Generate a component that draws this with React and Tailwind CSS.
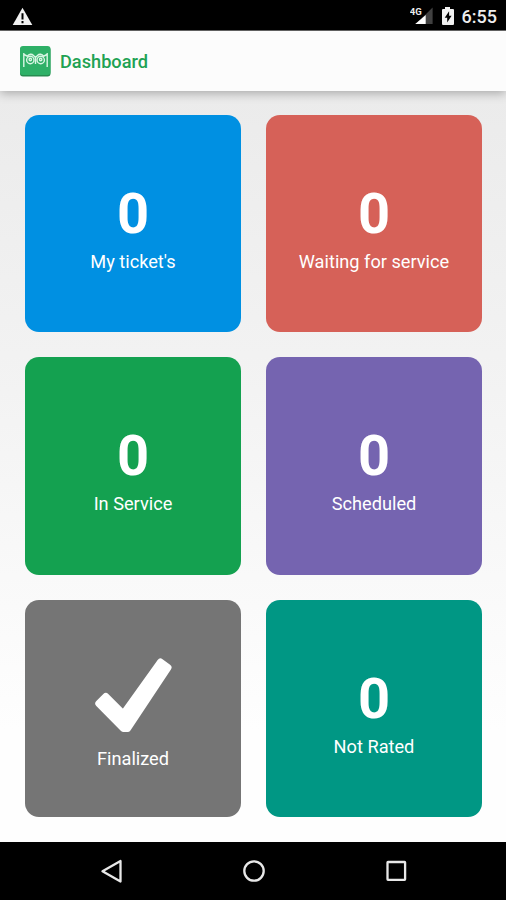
const cards = [
  { label: "My ticket's", color: 'bg-[#0090e2]', count: '0' },
  { label: 'Waiting for service', color: 'bg-[#d66158]', count: '0' },
  { label: 'In Service', color: 'bg-[#14a150]', count: '0' },
  { label: 'Scheduled', color: 'bg-[#7564b0]', count: '0' },
  { label: 'Finalized', color: 'bg-[#757575]', count: null },
  { label: 'Not Rated', color: 'bg-[#009784]', count: '0' },
];

function StatusBar() {
  return (
    <div className="flex h-[31px] items-center border-b border-[#6b6b6b] bg-black pl-3 pr-[9px]">
      <svg className="mt-0.5 h-[19px] w-[21px]" viewBox="0 0 21 19">
        <path d="M10.5 .8 20.3 18H.7Z" fill="#f2f2f2" />
        <path d="M10.5 6.2v6.2M10.5 14v2.2" stroke="#000" strokeWidth="2" />
      </svg>
      <svg className="ml-auto mt-0.5 h-5 w-[24px]" viewBox="0 0 24 20">
        <path d="M22.6 1.500V18H6Z" fill="#414141" />
        <path d="M15.700 9V18H5.200Z" fill="#fff" />
        <text x="-0.3" y="8.5" fill="#ededed" fontSize="9.5" fontWeight="700" fontFamily="Roboto, sans-serif">4G</text>
      </svg>
      <svg className="ml-[7px] mt-px h-5 w-[14px]" viewBox="0 0 14 20">
        <path d="M4 1h5v2h3q1 0 1 1v14q0 1-1 1H2q-1 0-1-1V4q0-1 1-1h2Z" fill="#f2f2f2" />
        <path d="M8.1 5.2 3.7 11.8h2.5v4.8l4.4-6.8H8.1Z" fill="#000" />
      </svg>
      <span className="ml-[7px] mt-[3px] text-[18px] font-medium leading-none text-[#ededed]">6:55</span>
    </div>
  );
}

function Header() {
  return (
    <header className="relative flex h-[60px] items-center bg-[#fcfcfc] pl-5 shadow-[0_2px_10px_rgba(0,0,0,0.3)]">
      <svg className="h-8 w-[31px]" viewBox="0 0 31 32">
        <rect y="2" width="30.5" height="29.5" rx="3" fill="#278b50" />
        <rect y="1" width="30.5" height="29" rx="3" fill="#2eb067" />
        <g fill="none" stroke="#d9f5e4" strokeWidth="1.4">
          <path d="M3.800 8v14M27.200 8v14M4 9.500l4 2M27 9.500l-4 2M7 11.500q3.500-4 6.500-1l2 2 2-2q3-3 6.500 1" />
          <circle cx="10.300" cy="15" r="3.700" />
          <circle cx="20.700" cy="15" r="3.700" />
          <circle cx="10.300" cy="14.500" r="1.200" />
          <circle cx="20.700" cy="14.500" r="1.200" />
          <path d="M15.500 13v6" />
        </g>
      </svg>
      <h1 className="ml-[9px] mt-0.5 text-[18.2px] font-medium leading-[18px] text-[#1fa253]">Dashboard</h1>
    </header>
  );
}

function Card({ label, color, count }) {
  return (
    <div className={`flex flex-col items-center rounded-[14px] text-white ${color}`}>
      {count !== null ? (
        <span className="mt-[71px] text-[56px] font-bold leading-[56px]">{count}</span>
      ) : (
        <svg className="mb-1.5 mt-[57px] h-[76px] w-[78px]" viewBox="0 0 78 76">
          <path d="m4.800 46.500 7-7L29.300 57 66.500 5l7.500 5.500L33.500 71.500H29.500Z" fill="#fff" stroke="#fff" strokeWidth="7" strokeLinejoin="round" />
        </svg>
      )}
      <span className="mt-[9px] text-[18.2px] leading-[21px]">{label}</span>
    </div>
  );
}

function NavBar() {
  return (
    <nav className="h-[58px] bg-black">
      <svg className="h-[58px] w-[506px]" viewBox="0 0 506 58" fill="none" stroke="#e8e8e8" strokeWidth="2.300" strokeLinejoin="round">
        <path d="M120.500 19v20.500L102.500 29.200Z" />
        <circle cx="254" cy="29" r="9.700" />
        <rect x="387.500" y="20" width="17.600" height="17.800" rx=".5" />
      </svg>
    </nav>
  );
}

export default function App() {
  return (
    <div className="flex h-[900px] w-[506px] flex-col overflow-hidden font-['Roboto',sans-serif]">
      <StatusBar />
      <Header />
      <main className="grid flex-1 grid-cols-2 grid-rows-3 gap-[25px] bg-linear-to-b from-[#ebebeb] via-[#f3f3f3] via-40% to-[#fefefe] to-85% pb-[25px] pl-[25px] pr-6 pt-6">
        {cards.map((card) => (
          <Card key={card.label} {...card} />
        ))}
      </main>
      <NavBar />
    </div>
  );
}
